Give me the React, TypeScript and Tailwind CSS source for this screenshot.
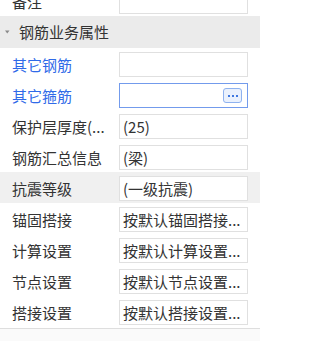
import React from "react";

const font = { fontFamily: '"Noto Sans CJK SC", "Noto Sans", sans-serif' };

type Row = { label: string; value?: string; blue?: boolean; gray?: boolean; active?: boolean };

const rows: Row[] = [
  { label: "其它钢筋", blue: true },
  { label: "其它箍筋", blue: true, active: true },
  { label: "保护层厚度(...", value: "(25)" },
  { label: "钢筋汇总信息", value: "(梁)" },
  { label: "抗震等级", value: "(一级抗震)", gray: true },
  { label: "锚固搭接", value: "按默认锚固搭接..." },
  { label: "计算设置", value: "按默认计算设置..." },
  { label: "节点设置", value: "按默认节点设置..." },
  { label: "搭接设置", value: "按默认搭接设置..." },
];

function RowView({ r }: { r: Row }) {
  return (
    <div className={`flex h-[31px] items-center pt-[2px] ${r.gray ? "bg-[#f0f0f0]" : "bg-white"}`}>
      <div
        className={`w-[119px] shrink-0 overflow-hidden whitespace-nowrap pl-[12px] text-[15px] leading-[20px] ${
          r.blue ? "text-[#2f6ae8]" : "text-[#333333]"
        }`}
      >
        {r.label}
      </div>
      <div
        className={`relative flex h-[25px] w-[129px] shrink-0 items-center overflow-hidden whitespace-nowrap border bg-white pl-[3px] text-[15px] leading-[20px] text-[#333333] ${
          r.active ? "border-[#739bec]" : "border-[#e0e0e0]"
        }`}
      >
        {r.value}
        {r.active && (
          <div className="absolute right-[5px] top-[4px] flex h-[15px] w-[19px] items-center justify-center gap-[2px] rounded-[3px] border border-[#8fb2ef] bg-[#eaf1fd]">
            <span className="h-[2px] w-[2px] bg-[#3f78e0]" />
            <span className="h-[2px] w-[2px] bg-[#3f78e0]" />
            <span className="h-[2px] w-[2px] bg-[#3f78e0]" />
          </div>
        )}
      </div>
    </div>
  );
}

export default function App() {
  return (
    <div className="h-[341px] w-[260px] overflow-hidden bg-white" style={font}>
      <div className="-mt-[15px]">
        <RowView r={{ label: "备注" }} />
      </div>
      <div className="flex h-[32px] items-center bg-[#ebebeb]">
        <svg width="19" height="32" viewBox="0 0 19 32" className="shrink-0">
          <path d="M5 14.5 L9.5 14.5 L7.25 17.5 Z" fill="#8a8a8a" />
        </svg>
        <span className="text-[15px] leading-[20px] text-[#333333]">钢筋业务属性</span>
      </div>
      {rows.map((r, i) => (
        <RowView key={i} r={r} />
      ))}
      <div className="mt-[1px] h-[1px] bg-[#dedede]" />
      <div className="h-[20px] bg-[#fafafa]" />
    </div>
  );
}
